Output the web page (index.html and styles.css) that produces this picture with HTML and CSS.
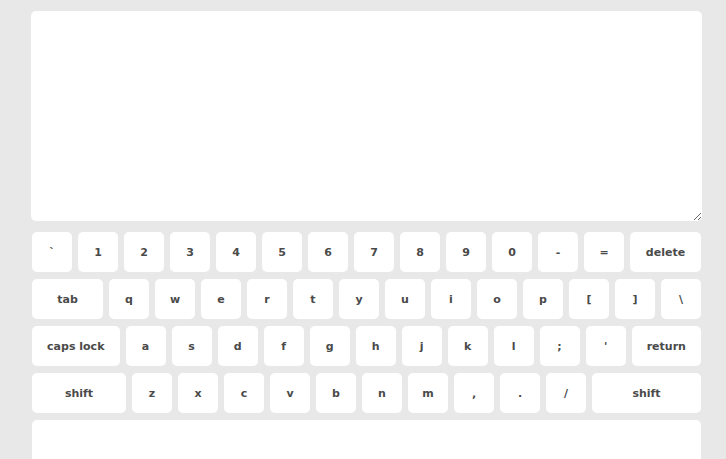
FILE: index.html
```html
<!DOCTYPE html>
<html lang="en">
<head>
    <meta charset="UTF-8">
    <meta name="viewport" content="width=device-width, initial-scale=1.0">
    <title>Keyboard</title>
    <link rel="stylesheet" href="styles.css">
</head>
<body>

    <div class="container">
        <textarea class="write" id="write"></textarea>

        <div class="keyboard">
            <div class="row">
                <button class="key">`</button>
                <button class="key">1</button>
                <button class="key">2</button>
                <button class="key">3</button>
                <button class="key">4</button>
                <button class="key">5</button>
                <button class="key">6</button>
                <button class="key">7</button>
                <button class="key">8</button>
                <button class="key">9</button>
                <button class="key">0</button>
                <button class="key">-</button>
                <button class="key">=</button>
                <button class="key wide">delete</button>
            </div>
            <div class="row">
                <button class="key wide">tab</button>
                <button class="key">q</button>
                <button class="key">w</button>
                <button class="key">e</button>
                <button class="key">r</button>
                <button class="key">t</button>
                <button class="key">y</button>
                <button class="key">u</button>
                <button class="key">i</button>
                <button class="key">o</button>
                <button class="key">p</button>
                <button class="key">[</button>
                <button class="key">]</button>
                <button class="key">\</button>
            </div>
            <div class="row">
                <button class="key wide">caps lock</button>
                <button class="key">a</button>
                <button class="key">s</button>
                <button class="key">d</button>
                <button class="key">f</button>
                <button class="key">g</button>
                <button class="key">h</button>
                <button class="key">j</button>
                <button class="key">k</button>
                <button class="key">l</button>
                <button class="key">;</button>
                <button class="key">'</button>
                <button class="key wide">return</button>
            </div>
            <div class="row">
                <button class="key left-shift">shift</button>
                <button class="key">z</button>
                <button class="key">x</button>
                <button class="key">c</button>
                <button class="key">v</button>
                <button class="key">b</button>
                <button class="key">n</button>
                <button class="key">m</button>
                <button class="key">,</button>
                <button class="key">.</button>
                <button class="key">/</button>
                <button class="key wide">shift</button>
            </div>
            <div class="row">
                <button class="key space"></button>
            </div>
        </div>
    </div>

</body>
</html>
```

FILE: styles.css
```css
* {
    box-sizing: border-box;
}

html, body {
    margin: 0;
    height: 100%;
    overflow: hidden;
}

body {
    background-color: #e8e8e8;
    font-family: "DejaVu Sans", Verdana, sans-serif;
}

.container {
    width: 671px;
    margin: 11px 0 0 31px;
}

.write {
    display: block;
    width: 671px;
    height: 210px;
    padding: 8px;
    border: none;
    border-radius: 5px;
    background-color: #ffffff;
    resize: vertical;
    outline: none;
}

.keyboard {
    display: flex;
    flex-direction: column;
    gap: 7px;
    margin: 11px 1px 0 1px;
}

.row {
    display: flex;
    gap: 6px;
}

.key {
    flex: 0 0 40px;
    height: 40px;
    padding: 0;
    border: none;
    border-radius: 5px;
    background-color: #ffffff;
    color: #4a4a4a;
    font-family: "DejaVu Sans", Verdana, sans-serif;
    font-size: 11px;
    font-weight: bold;
    cursor: pointer;
}

.key.wide {
    flex: 1 1 auto;
}

.key.left-shift {
    flex: 0 0 94px;
}

.key.space {
    flex: 1 1 auto;
    height: 50px;
}

.key:hover {
    background-color: #f4f4f4;
}
```
